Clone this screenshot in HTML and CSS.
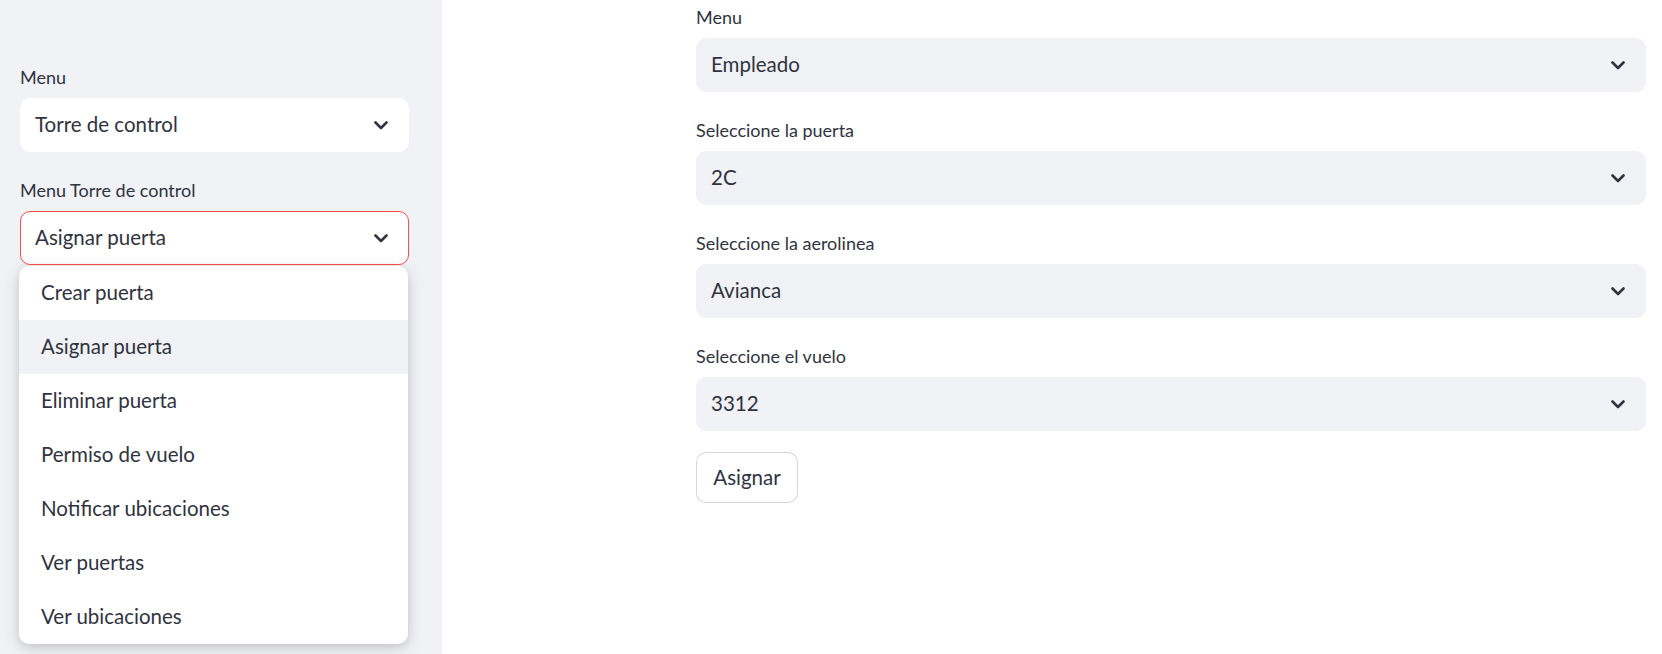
FILE: index.html
```html
<!DOCTYPE html>
<html lang="es">
<head>
<meta charset="utf-8">
<title>Torre de control</title>
<link rel="stylesheet" href="styles.css">
</head>
<body>
<div class="app">
  <aside class="sidebar">
    <div class="field">
      <div class="label">Menu</div>
      <div class="select select-white">
        <span class="value">Torre de control</span>
        <svg class="chev" viewBox="0 0 14 9" width="14" height="9"><path d="M1.5 1.5 L7 7 L12.5 1.5" fill="none" stroke="#31333F" stroke-width="2.6" stroke-linecap="round" stroke-linejoin="round"/></svg>
      </div>
    </div>
    <div class="field">
      <div class="label">Menu Torre de control</div>
      <div class="select-wrap">
        <div class="select select-white select-open">
          <span class="value">Asignar puerta</span>
          <svg class="chev" viewBox="0 0 14 9" width="14" height="9"><path d="M1.5 1.5 L7 7 L12.5 1.5" fill="none" stroke="#31333F" stroke-width="2.6" stroke-linecap="round" stroke-linejoin="round"/></svg>
        </div>
        <ul class="menu">
          <li class="option">Crear puerta</li>
          <li class="option active">Asignar puerta</li>
          <li class="option">Eliminar puerta</li>
          <li class="option">Permiso de vuelo</li>
          <li class="option">Notificar ubicaciones</li>
          <li class="option">Ver puertas</li>
          <li class="option">Ver ubicaciones</li>
        </ul>
      </div>
    </div>
  </aside>
  <main class="main">
    <div class="field">
      <div class="label">Menu</div>
      <div class="select">
        <span class="value">Empleado</span>
        <svg class="chev" viewBox="0 0 14 9" width="14" height="9"><path d="M1.5 1.5 L7 7 L12.5 1.5" fill="none" stroke="#31333F" stroke-width="2.6" stroke-linecap="round" stroke-linejoin="round"/></svg>
      </div>
    </div>
    <div class="field">
      <div class="label">Seleccione la puerta</div>
      <div class="select">
        <span class="value">2C</span>
        <svg class="chev" viewBox="0 0 14 9" width="14" height="9"><path d="M1.5 1.5 L7 7 L12.5 1.5" fill="none" stroke="#31333F" stroke-width="2.6" stroke-linecap="round" stroke-linejoin="round"/></svg>
      </div>
    </div>
    <div class="field">
      <div class="label">Seleccione la aerolinea</div>
      <div class="select">
        <span class="value">Avianca</span>
        <svg class="chev" viewBox="0 0 14 9" width="14" height="9"><path d="M1.5 1.5 L7 7 L12.5 1.5" fill="none" stroke="#31333F" stroke-width="2.6" stroke-linecap="round" stroke-linejoin="round"/></svg>
      </div>
    </div>
    <div class="field">
      <div class="label">Seleccione el vuelo</div>
      <div class="select">
        <span class="value">3312</span>
        <svg class="chev" viewBox="0 0 14 9" width="14" height="9"><path d="M1.5 1.5 L7 7 L12.5 1.5" fill="none" stroke="#31333F" stroke-width="2.6" stroke-linecap="round" stroke-linejoin="round"/></svg>
      </div>
    </div>
    <button class="btn" type="button">Asignar</button>
  </main>
</div>
</body>
</html>
```

FILE: styles.css
```css
* { box-sizing: border-box; }
html, body { margin: 0; padding: 0; }
body {
  font-family: "Source Sans Pro", Lato, "Noto Sans", sans-serif;
  color: #31333F;
  background: #ffffff;
  width: 1662px;
  height: 654px;
  overflow: hidden;
}
.app {
  display: flex;
  height: 654px;
}
.sidebar {
  width: 442px;
  flex: none;
  background: #f0f2f6;
  padding: 66px 33px 0 20px;
}
.main {
  flex: 1;
  padding: 6px 16px 0 254px;
}
.field {
  margin-bottom: 27px;
}
.label {
  font-size: 18px;
  line-height: 22px;
  height: 24px;
  margin-bottom: 8px;
  color: #31333F;
}
.select {
  height: 54px;
  border-radius: 10px;
  background: #f0f2f6;
  border: 1px solid #f0f2f6;
  display: flex;
  align-items: center;
  justify-content: space-between;
  padding: 0 20px 2px 14px;
  font-size: 20.5px;
}
.select .chev { margin-top: 2px; }
.select-white {
  background: #ffffff;
  border-color: #ffffff;
}
.select-open {
  border-color: #ff4b4b;
}
.chev { display: block; }
.select-wrap {
  position: relative;
}
.menu {
  position: absolute;
  top: calc(100% + 1px);
  left: -1px;
  right: 1px;
  margin: 0;
  padding: 0;
  list-style: none;
  background: #ffffff;
  border-radius: 10px;
  box-shadow: 0 4px 16px rgba(0, 0, 0, 0.16), 0 2px 6px rgba(0, 0, 0, 0.06);
  overflow: hidden;
  z-index: 10;
}
.option {
  height: 54px;
  display: flex;
  align-items: center;
  padding: 0 0 3px 22px;
  font-size: 20.5px;
  color: #31333F;
}
.option.active {
  background: #f0f2f6;
}
.btn {
  font-family: inherit;
  font-size: 20.5px;
  color: #31333F;
  background: #ffffff;
  border: 1px solid rgba(49, 51, 63, 0.2);
  border-radius: 10px;
  width: 102px;
  height: 51px;
  margin-top: -6px;
  padding: 0 0 2px 0;
}
```
